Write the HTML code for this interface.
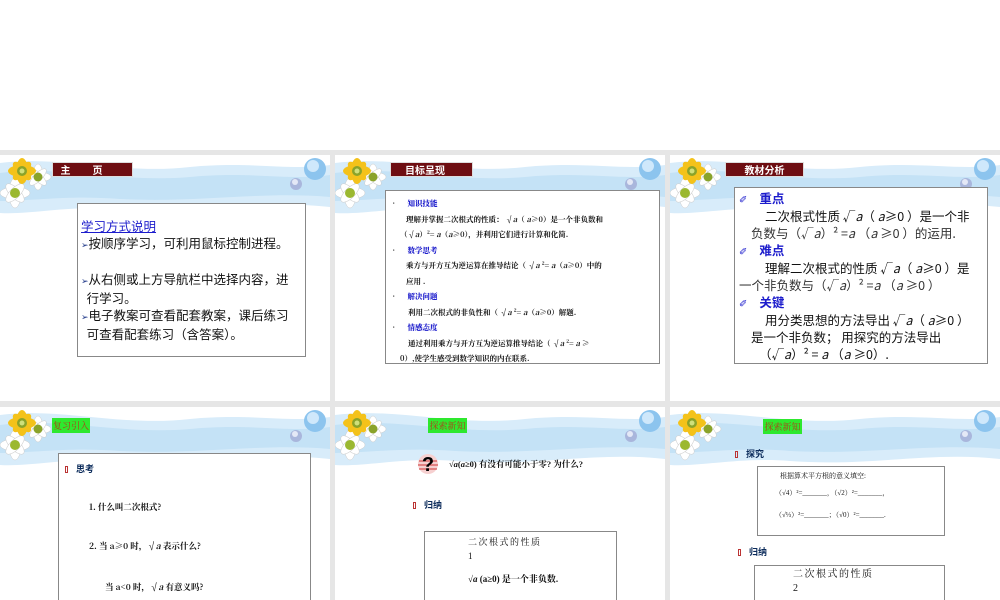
<!DOCTYPE html>
<html style="width:1000px;height:600px;overflow:hidden"><head><meta charset="utf-8"><style>
*{margin:0;padding:0;box-sizing:border-box}
body{width:1000px;height:600px;background:#fff;position:relative;overflow:hidden;font-family:"Liberation Serif","Noto Serif CJK SC","Noto Sans CJK SC",serif;color:#111}
.bg{position:absolute;left:0;top:150px;width:1000px;height:450px;background:#e6e6e6}
.s{position:absolute;width:330px;height:246px;background:#fff;overflow:hidden}
.s2{height:193px}
.hd{position:absolute;left:0;top:0;width:330px;height:75px}
.a{position:absolute}
.tt{position:absolute;background:#6e0e12;color:#fff;font:bold 10px "Noto Sans CJK SC",sans-serif;text-align:center;line-height:13px;border:1px solid #ddd}
.gt{position:absolute;background:#2ee82e;color:#b23a1a;font:9px "Noto Serif CJK SC",serif;text-align:center;line-height:15px}
.box{position:absolute;border:1px solid #888;background:#fff;overflow:hidden}
.ob{border-bottom:none}
.t13{font-size:12.5px;line-height:17px}
.blue{color:#1c1ccc}
.nav{color:#0a2a5a;font:bold 9px "Noto Sans CJK SC",sans-serif}
.sq{display:inline-block;width:3px;height:7px;border:1px solid #b33;margin-right:8px;vertical-align:middle}
</style></head><body>
<div class="bg"></div>

<svg width="0" height="0" style="position:absolute"><defs>
<g id="hdr">
<path d="M0 0H330V75H0Z" fill="#fff"/>
<path d="M0 8 C60 0 120 20 190 12 C250 6 290 16 330 10 V52 C260 44 200 60 120 54 C70 50 30 60 0 58Z" fill="#d8ecfa"/>
<path d="M0 18 C60 10 120 28 190 22 C250 16 290 26 330 20 V42 C260 36 200 48 120 44 C70 40 30 46 0 46Z" fill="#c4e2f6"/>
<circle cx="315" cy="14" r="11" fill="#8cc4ee"/><circle cx="313" cy="11" r="6" fill="#cfe8fb"/>
<circle cx="296" cy="29" r="6" fill="#a9b6dc"/><circle cx="295" cy="27" r="3" fill="#e4e8f6"/>
<g fill="#fff" stroke="#ccc" stroke-width=".5">
<ellipse cx="15" cy="38" rx="15" ry="6"/><ellipse cx="15" cy="38" rx="6" ry="15"/><ellipse cx="15" cy="38" rx="12" ry="5" transform="rotate(45 15 38)"/><ellipse cx="15" cy="38" rx="12" ry="5" transform="rotate(-45 15 38)"/>
<ellipse cx="38" cy="22" rx="13" ry="5"/><ellipse cx="38" cy="22" rx="5" ry="13"/><ellipse cx="38" cy="22" rx="11" ry="4" transform="rotate(45 38 22)"/><ellipse cx="38" cy="22" rx="11" ry="4" transform="rotate(-45 38 22)"/></g>
<g fill="#f4c21a"><ellipse cx="22" cy="16" rx="14" ry="6"/><ellipse cx="22" cy="16" rx="6" ry="13"/><ellipse cx="22" cy="16" rx="12" ry="5" transform="rotate(45 22 16)"/><ellipse cx="22" cy="16" rx="12" ry="5" transform="rotate(-45 22 16)"/></g>
<circle cx="22" cy="16" r="5" fill="#8aa32a"/><circle cx="22" cy="16" r="2.5" fill="#cfe07a"/><circle cx="15" cy="38" r="5" fill="#9bb830"/><circle cx="38" cy="22" r="4.5" fill="#8aa32a"/>
</g></defs></svg>

<!-- Slide 1 -->
<div class="s" style="left:0;top:155px">
<svg class="hd"><use href="#hdr"/></svg>
<div class="tt" style="left:52px;top:7px;width:81px;letter-spacing:22px">主页</div>
<div class="box t13" style="left:77px;top:48px;width:229px;height:154px;padding:13px 4px 0 3px;font-family:'Noto Sans CJK SC',sans-serif">
<div class="blue" style="text-decoration:underline">学习方式说明</div>
<div><span style="color:#223a8a;font-size:9px">➢</span>按顺序学习，可利用鼠标控制进程。</div>
<div style="margin-top:17px"><span style="color:#223a8a;font-size:9px">➢</span>从右侧或上方导航栏中选择内容，进<br>&nbsp;&nbsp;行学习。</div>
<div><span style="color:#223a8a;font-size:9px">➢</span>电子教案可查看配套教案，课后练习<br>&nbsp;&nbsp;可查看配套练习（含答案）。</div>
</div></div>

<!-- Slide 2 -->
<div class="s" style="left:335px;top:155px">
<svg class="hd"><use href="#hdr"/></svg>
<div class="tt" style="left:55px;top:7px;width:83px;text-align:left;padding-left:14px">目标呈现</div>
<div class="box" style="left:50px;top:35px;width:275px;height:174px;padding:5px 0 0 4px;font-size:7.5px;line-height:15.5px;font-family:'Noto Serif CJK SC',serif;font-weight:bold">
<div><span style="margin-right:10px">•</span><b class="blue">知识技能</b></div>
<div style="padding-left:16px">理解并掌握二次根式的性质： √<i>a</i>（ <i>a</i>≥0）是一个非负数和</div>
<div style="padding-left:10px">（√<i>a</i>）²= <i>a</i>（<i>a</i>≥0），并利用它们进行计算和化简.</div>
<div><span style="margin-right:10px">•</span><b class="blue">数学思考</b></div>
<div style="padding-left:16px">乘方与开方互为逆运算在推导结论（ √<i>a</i> ²= <i>a</i>（<i>a</i>≥0）中的</div>
<div style="padding-left:16px">应用 .</div>
<div><span style="margin-right:10px">•</span><b class="blue">解决问题</b></div>
<div style="padding-left:18px">利用二次根式的非负性和（ √<i>a</i> ²= <i>a</i>（<i>a</i>≥0）解题.</div>
<div><span style="margin-right:10px">•</span><b class="blue">情感态度</b></div>
<div style="padding-left:18px">通过利用乘方与开方互为逆运算推导结论（ √<i>a</i> ²= <i>a</i> ≥</div>
<div style="padding-left:10px">0）,使学生感受到数学知识的内在联系.</div>
</div></div>

<!-- Slide 3 -->
<div class="s" style="left:670px;top:155px">
<svg class="hd"><use href="#hdr"/></svg>
<div class="tt" style="left:55px;top:7px;width:79px">教材分析</div>
<div class="box" style="left:64px;top:32px;width:254px;height:177px;padding:1px 0 0 4px;font-size:12.5px;line-height:17px;font-family:'Noto Sans CJK SC',sans-serif">
<div><span class="blue" style="font-size:10px;margin-right:12px">✐</span><b class="blue">重点</b></div>
<div style="padding-left:26px">二次根式性质 √<i>a</i>（ <i>a</i>≥0 ）是一个非</div>
<div style="padding-left:12px;color:#333">负数与（√<i>a</i>）² =<i>a</i> （<i>a</i> ≥0 ）的运用.</div>
<div><span class="blue" style="font-size:10px;margin-right:12px">✐</span><b class="blue">难点</b></div>
<div style="padding-left:26px">理解二次根式的性质 √<i>a</i>（ <i>a</i>≥0 ）是</div>
<div style="color:#333">一个非负数与（√<i>a</i>）² =<i>a</i> （<i>a</i> ≥0 ）</div>
<div><span class="blue" style="font-size:10px;margin-right:12px">✐</span><b class="blue">关键</b></div>
<div style="padding-left:26px">用分类思想的方法导出 √<i>a</i>（ <i>a</i>≥0 ）</div>
<div style="padding-left:12px">是一个非负数； 用探究的方法导出</div>
<div style="padding-left:20px">（√<i>a</i>）² = <i>a</i> （<i>a</i> ≥0）.</div>
</div></div>

<!-- Slide 4 -->
<div class="s s2" style="left:0;top:407px">
<svg class="hd"><use href="#hdr"/></svg>
<div class="gt" style="left:52px;top:11px;width:38px">复习引入</div>
<div class="box ob" style="left:58px;top:46px;width:253px;height:147px;padding:8px 0 0 6px;font-size:8.5px;font-family:'Noto Serif CJK SC',serif">
<div class="nav"><span class="sq"></span>思考</div>
<div style="margin:26px 0 0 24px;font-weight:bold">1. 什么叫二次根式?</div>
<div style="margin:27px 0 0 24px;font-weight:bold">2. 当 a≥0 时，√<i>a</i> 表示什么?</div>
<div style="margin:29px 0 0 40px;font-weight:bold">当 a&lt;0 时，√<i>a</i> 有意义吗?</div>
</div></div>

<!-- Slide 5 -->
<div class="s s2" style="left:335px;top:407px">
<svg class="hd"><use href="#hdr"/></svg>
<div class="gt" style="left:93px;top:11px;width:39px">探索新知</div>
<svg class="a" style="left:82px;top:46px" width="22" height="22"><circle cx="11" cy="11" r="10" fill="#f6d0d0"/><g stroke="#c33" stroke-width="1"><line x1="2" y1="8" x2="20" y2="8"/><line x1="1" y1="12" x2="21" y2="12"/><line x1="2" y1="16" x2="20" y2="16"/></g><text x="11" y="18" font-size="20" font-weight="bold" text-anchor="middle" font-family="Liberation Sans">?</text></svg>
<div class="a" style="left:114px;top:51px;font-size:8.5px;font-weight:bold">√<i>a</i>(<i>a</i>≥0) 有没有可能小于零? 为什么?</div>
<div class="a nav" style="left:78px;top:91px"><span class="sq"></span>归纳</div>
<div class="box ob" style="left:89px;top:124px;width:193px;height:69px;padding:3px 0 0 43px;font-size:9px;line-height:14px">
<div style="letter-spacing:1.5px">二次根式的性质</div><div>1</div>
<div style="margin-top:9px;font-weight:bold">√<i>a</i> (a≥0) 是一个非负数.</div>
</div></div>

<!-- Slide 6 -->
<div class="s s2" style="left:670px;top:407px">
<svg class="hd"><use href="#hdr"/></svg>
<div class="gt" style="left:93px;top:12px;width:39px">探索新知</div>
<div class="a nav" style="left:65px;top:40px"><span class="sq"></span>探究</div>
<div class="box" style="left:87px;top:59px;width:188px;height:70px;padding:3px 0 0 22px;font-size:7px;line-height:22px">
<div style="line-height:12px">根据算术平方根的意义填空:</div>
<div style="margin-left:-5px">（√4）²=_______，（√2）²=_______，</div>
<div style="margin-left:-5px">（√⅓）²=_______；（√0）²=_______.</div>
</div>
<div class="a nav" style="left:68px;top:138px"><span class="sq"></span>归纳</div>
<div class="box ob" style="left:84px;top:158px;width:191px;height:35px;padding:2px 0 0 38px;font-size:10px;line-height:14px">
<div style="letter-spacing:1.5px">二次根式的性质</div><div>2</div>
</div></div>
</body></html>
